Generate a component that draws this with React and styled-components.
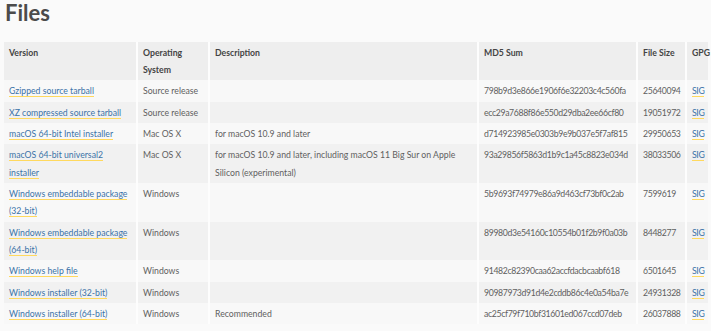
import React from "react";
import styled, { createGlobalStyle } from "styled-components";

const Global = createGlobalStyle`
  html, body { margin: 0; padding: 0; background: #fafafa; }
  body { font-family: Lato, "Open Sans", sans-serif; color: #666; }
`;

const Page = styled.div`
  padding: 0 3px 0 4px;
`;

const Title = styled.h2`
  margin: 0;
  padding: 1px 0 0 1px;
  height: 42px;
  box-sizing: border-box;
  font-family: Lato, sans-serif;
  font-weight: 700;
  font-size: 22px;
  line-height: 24px;
  color: #4b4b4b;
`;

const Table = styled.table`
  width: 704px;
  table-layout: fixed;
  border-collapse: collapse;
  font-size: 8.7px;
  line-height: 17.2px;
`;

const Th = styled.th`
  text-align: left;
  vertical-align: top;
  font-weight: 700;
  color: #444;
  background: #eeeeee;
  padding: 1.5px 0 2.4px 5px;
  border-right: 2px solid #fdfdfd;
  white-space: ${(p) => (p.$nowrap ? "nowrap" : "normal")};
  &:last-child { border-right: none; }
`;

const Tr = styled.tr`
  background: ${(p) => (p.$alt ? "#f1f1f1" : "#f8f8f8")};
`;

const Td = styled.td`
  vertical-align: top;
  padding: 2px 6px 2.2px 5px;
  color: #5f5f5f;
  border-right: 2px solid #fdfdfd;
  white-space: ${(p) => (p.$mono ? "nowrap" : "normal")};
  letter-spacing: ${(p) => (p.$mono ? "-0.35px" : "normal")};
  &:last-child { border-right: none; padding-right: 0; }
`;

const Link = styled.a`
  color: #3b73a8;
  text-decoration: none;
  border-bottom: 1px solid #ffd95e;
`;

const rows = [
  ["Gzipped source tarball", "Source release", "", "798b9d3e866e1906f6e32203c4c560fa", "25640094"],
  ["XZ compressed source tarball", "Source release", "", "ecc29a7688f86e550d29dba2ee66cf80", "19051972"],
  ["macOS 64-bit Intel installer", "Mac OS X", "for macOS 10.9 and later", "d714923985e0303b9e9b037e5f7af815", "29950653"],
  ["macOS 64-bit universal2 installer", "Mac OS X", "for macOS 10.9 and later, including macOS 11 Big Sur on Apple Silicon (experimental)", "93a29856f5863d1b9c1a45c8823e034d", "38033506"],
  ["Windows embeddable package (32-bit)", "Windows", "", "5b9693f74979e86a9d463cf73bf0c2ab", "7599619"],
  ["Windows embeddable package (64-bit)", "Windows", "", "89980d3e54160c10554b01f2b9f0a03b", "8448277"],
  ["Windows help file", "Windows", "", "91482c82390caa62accfdacbcaabf618", "6501645"],
  ["Windows installer (32-bit)", "Windows", "", "90987973d91d4e2cddb86c4e0a54ba7e", "24931328"],
  ["Windows installer (64-bit)", "Windows", "Recommended", "ac25cf79f710bf31601ed067ccd07deb", "26037888"],
];

export default function App() {
  return (
    <Page>
      <Global />
      <Title>Files</Title>
      <Table>
        <colgroup>
          <col style={{ width: 133 }} />
          <col style={{ width: 72 }} />
          <col style={{ width: 269 }} />
          <col style={{ width: 159 }} />
          <col style={{ width: 49 }} />
          <col style={{ width: 22 }} />
        </colgroup>
        <thead>
          <tr>
            <Th>Version</Th>
            <Th>Operating System</Th>
            <Th>Description</Th>
            <Th>MD5 Sum</Th>
            <Th $nowrap>File Size</Th>
            <Th $nowrap>GPG</Th>
          </tr>
        </thead>
        <tbody>
          {rows.map((r, i) => (
            <Tr key={i} $alt={i % 2 === 1}>
              <Td><Link href="#">{r[0]}</Link></Td>
              <Td>{r[1]}</Td>
              <Td>{r[2]}</Td>
              <Td $mono>{r[3]}</Td>
              <Td $mono>{r[4]}</Td>
              <Td $mono><Link href="#">SIG</Link></Td>
            </Tr>
          ))}
        </tbody>
      </Table>
    </Page>
  );
}
